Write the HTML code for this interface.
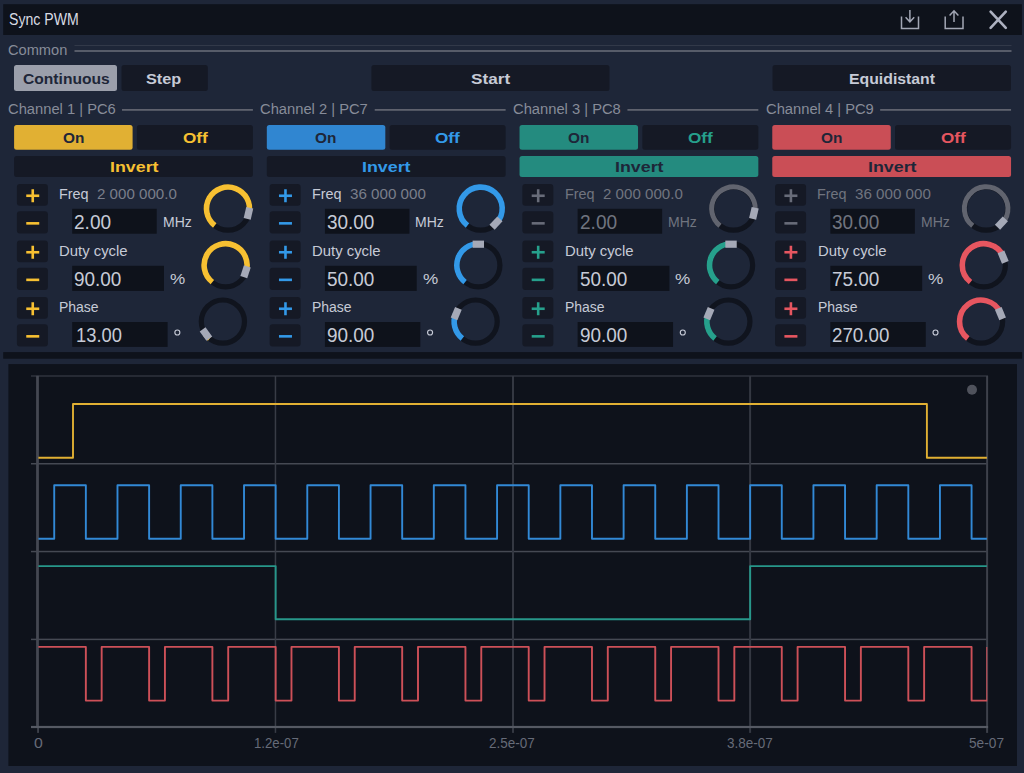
<!DOCTYPE html>
<html><head><meta charset="utf-8"><title>Sync PWM</title>
<style>
html,body{margin:0;padding:0;}
body{width:1024px;height:773px;background:#1e2638;position:relative;overflow:hidden;font-family:"Liberation Sans",sans-serif;}
.t{position:absolute;white-space:pre;line-height:1;transform-origin:0 0;}
.b{position:absolute;}
</style></head><body>
<svg class="b" style="left:0;top:0" width="1024" height="773" viewBox="0 0 1024 773">
<rect x="3.20" y="4.20" width="1018.70" height="30.80" fill="#0e121b"/>
<g fill="none" stroke="#a2a6b4" stroke-width="1.5"><path d="M901.5 16.5 V28.4 H918.5 V16.5"/><path d="M909.9 10 V21.8 M905.6 17.2 L909.9 21.8 L914.2 17.2"/><path d="M945.2 16.5 V28.4 H963 V16.5"/><path d="M954 22 V11 M949.6 15.4 L954 10.8 L958.4 15.4"/></g><path d="M990.6 11.6 L1005.8 27.9 M1005.8 11.6 L990.6 27.9" fill="none" stroke="#adb1c0" stroke-width="2.6" stroke-linecap="round"/>
<rect x="74.50" y="50.20" width="937.00" height="1.60" fill="#666a75"/>
<rect x="74.50" y="45.00" width="937.00" height="1.00" fill="#323949"/>
<rect x="14.00" y="65.00" width="103.00" height="26.10" rx="2.5" fill="#9b9fab"/>
<rect x="121.50" y="65.00" width="86.30" height="26.10" rx="2.5" fill="#151925"/>
<rect x="371.40" y="65.00" width="238.10" height="26.10" rx="2.5" fill="#151925"/>
<rect x="772.50" y="65.00" width="238.50" height="26.10" rx="2.5" fill="#151925"/>
<rect x="122.00" y="109.10" width="130.90" height="1.60" fill="#666a75"/>
<rect x="14.10" y="124.90" width="118.50" height="24.80" rx="2.5" fill="#e1b033"/>
<rect x="136.90" y="124.90" width="116.00" height="24.80" rx="2.5" fill="#151925"/>
<rect x="14.10" y="156.00" width="238.80" height="20.90" rx="2.5" fill="#151925"/>
<rect x="16.90" y="183.90" width="31.00" height="21.90" rx="3" fill="#151925"/>
<rect x="26.25" y="194.45" width="13.00" height="2.60" fill="#f7c032"/>
<rect x="31.45" y="189.25" width="2.60" height="13.00" fill="#f7c032"/>
<rect x="16.90" y="211.30" width="31.00" height="22.30" rx="3" fill="#151925"/>
<rect x="26.25" y="222.05" width="13.00" height="2.60" fill="#f7c032"/>
<rect x="72.20" y="208.80" width="84.50" height="24.90" fill="#0e121b"/>
<circle cx="228.00" cy="208.60" r="21.6" fill="none" stroke="#10141e" stroke-width="5.2"/><path d="M214.76 225.54 A21.5 21.5 0 1 1 248.95 213.44" fill="none" stroke="#f7c032" stroke-width="5.6"/><rect x="244.86" y="207.62" width="7.2" height="11.4" fill="#a5a9b7" transform="rotate(193.00 248.46 213.32)"/>
<rect x="16.90" y="240.40" width="31.00" height="21.90" rx="3" fill="#151925"/>
<rect x="26.25" y="250.95" width="13.00" height="2.60" fill="#f7c032"/>
<rect x="31.45" y="245.75" width="2.60" height="13.00" fill="#f7c032"/>
<rect x="16.90" y="267.80" width="31.00" height="22.30" rx="3" fill="#151925"/>
<rect x="26.25" y="278.55" width="13.00" height="2.60" fill="#f7c032"/>
<rect x="72.20" y="265.80" width="91.80" height="25.10" fill="#0e121b"/>
<circle cx="225.60" cy="265.20" r="21.6" fill="none" stroke="#10141e" stroke-width="5.2"/><path d="M212.36 282.14 A21.5 21.5 0 1 1 246.05 271.84" fill="none" stroke="#f7c032" stroke-width="5.6"/><rect x="241.97" y="265.99" width="7.2" height="11.4" fill="#a5a9b7" transform="rotate(198.00 245.57 271.69)"/>
<rect x="16.90" y="296.90" width="31.00" height="21.90" rx="3" fill="#151925"/>
<rect x="26.25" y="307.45" width="13.00" height="2.60" fill="#f7c032"/>
<rect x="31.45" y="302.25" width="2.60" height="13.00" fill="#f7c032"/>
<rect x="16.90" y="324.30" width="31.00" height="22.30" rx="3" fill="#151925"/>
<rect x="26.25" y="335.05" width="13.00" height="2.60" fill="#f7c032"/>
<rect x="72.20" y="322.00" width="95.40" height="24.90" fill="#0e121b"/>
<circle cx="177.35" cy="332.5" r="2.5" fill="none" stroke="#c6cad6" stroke-width="1.15"/>
<circle cx="222.90" cy="321.60" r="21.6" fill="none" stroke="#10141e" stroke-width="5.2"/><path d="M209.66 338.54 A21.5 21.5 0 0 1 205.55 334.30" fill="none" stroke="#f7c032" stroke-width="5.6"/><rect x="202.35" y="328.30" width="7.2" height="11.4" fill="#a5a9b7" transform="rotate(323.80 205.95 334.00)"/>
<rect x="374.72" y="109.10" width="130.90" height="1.60" fill="#666a75"/>
<rect x="266.82" y="124.90" width="118.50" height="24.80" rx="2.5" fill="#3086d1"/>
<rect x="389.62" y="124.90" width="116.00" height="24.80" rx="2.5" fill="#151925"/>
<rect x="266.82" y="156.00" width="238.80" height="20.90" rx="2.5" fill="#151925"/>
<rect x="269.62" y="183.90" width="31.00" height="21.90" rx="3" fill="#151925"/>
<rect x="278.97" y="194.45" width="13.00" height="2.60" fill="#3399e8"/>
<rect x="284.17" y="189.25" width="2.60" height="13.00" fill="#3399e8"/>
<rect x="269.62" y="211.30" width="31.00" height="22.30" rx="3" fill="#151925"/>
<rect x="278.97" y="222.05" width="13.00" height="2.60" fill="#3399e8"/>
<rect x="324.92" y="208.80" width="84.50" height="24.90" fill="#0e121b"/>
<circle cx="480.72" cy="208.60" r="21.6" fill="none" stroke="#10141e" stroke-width="5.2"/><path d="M467.48 225.54 A21.5 21.5 0 1 1 496.34 223.37" fill="none" stroke="#3399e8" stroke-width="5.6"/><rect x="492.38" y="217.33" width="7.2" height="11.4" fill="#a5a9b7" transform="rotate(223.40 495.98 223.03)"/>
<rect x="269.62" y="240.40" width="31.00" height="21.90" rx="3" fill="#151925"/>
<rect x="278.97" y="250.95" width="13.00" height="2.60" fill="#3399e8"/>
<rect x="284.17" y="245.75" width="2.60" height="13.00" fill="#3399e8"/>
<rect x="269.62" y="267.80" width="31.00" height="22.30" rx="3" fill="#151925"/>
<rect x="278.97" y="278.55" width="13.00" height="2.60" fill="#3399e8"/>
<rect x="324.92" y="265.80" width="91.80" height="25.10" fill="#0e121b"/>
<circle cx="478.32" cy="265.20" r="21.6" fill="none" stroke="#10141e" stroke-width="5.2"/><path d="M465.08 282.14 A21.5 21.5 0 0 1 478.32 243.70" fill="none" stroke="#3399e8" stroke-width="5.6"/><rect x="474.72" y="238.50" width="7.2" height="11.4" fill="#a5a9b7" transform="rotate(90.00 478.32 244.20)"/>
<rect x="269.62" y="296.90" width="31.00" height="21.90" rx="3" fill="#151925"/>
<rect x="278.97" y="307.45" width="13.00" height="2.60" fill="#3399e8"/>
<rect x="284.17" y="302.25" width="2.60" height="13.00" fill="#3399e8"/>
<rect x="269.62" y="324.30" width="31.00" height="22.30" rx="3" fill="#151925"/>
<rect x="278.97" y="335.05" width="13.00" height="2.60" fill="#3399e8"/>
<rect x="324.92" y="322.00" width="95.40" height="24.90" fill="#0e121b"/>
<circle cx="430.07" cy="332.5" r="2.5" fill="none" stroke="#c6cad6" stroke-width="1.15"/>
<circle cx="475.62" cy="321.60" r="21.6" fill="none" stroke="#10141e" stroke-width="5.2"/><path d="M462.38 338.54 A21.5 21.5 0 0 1 455.76 313.37" fill="none" stroke="#3399e8" stroke-width="5.6"/><rect x="452.62" y="307.86" width="7.2" height="11.4" fill="#a5a9b7" transform="rotate(382.50 456.22 313.56)"/>
<rect x="627.44" y="109.10" width="130.90" height="1.60" fill="#666a75"/>
<rect x="519.54" y="124.90" width="118.50" height="24.80" rx="2.5" fill="#248b7f"/>
<rect x="642.34" y="124.90" width="116.00" height="24.80" rx="2.5" fill="#151925"/>
<rect x="519.54" y="156.00" width="238.80" height="20.90" rx="2.5" fill="#248b7f"/>
<rect x="522.34" y="183.90" width="31.00" height="21.90" rx="3" fill="#151925"/>
<rect x="531.69" y="194.45" width="13.00" height="2.60" fill="#686c79"/>
<rect x="536.89" y="189.25" width="2.60" height="13.00" fill="#686c79"/>
<rect x="522.34" y="211.30" width="31.00" height="22.30" rx="3" fill="#151925"/>
<rect x="531.69" y="222.05" width="13.00" height="2.60" fill="#686c79"/>
<rect x="577.64" y="208.80" width="84.50" height="24.90" fill="#0e121b"/>
<circle cx="733.44" cy="208.60" r="21.6" fill="none" stroke="#10141e" stroke-width="5.2"/><path d="M720.02 225.78 A21.8 21.8 0 1 1 754.68 213.50" fill="none" stroke="#61646f" stroke-width="5.0"/><rect x="750.30" y="207.62" width="7.2" height="11.4" fill="#a5a9b7" transform="rotate(193.00 753.90 213.32)"/>
<rect x="522.34" y="240.40" width="31.00" height="21.90" rx="3" fill="#151925"/>
<rect x="531.69" y="250.95" width="13.00" height="2.60" fill="#26a08c"/>
<rect x="536.89" y="245.75" width="2.60" height="13.00" fill="#26a08c"/>
<rect x="522.34" y="267.80" width="31.00" height="22.30" rx="3" fill="#151925"/>
<rect x="531.69" y="278.55" width="13.00" height="2.60" fill="#26a08c"/>
<rect x="577.64" y="265.80" width="91.80" height="25.10" fill="#0e121b"/>
<circle cx="731.04" cy="265.20" r="21.6" fill="none" stroke="#10141e" stroke-width="5.2"/><path d="M717.80 282.14 A21.5 21.5 0 0 1 731.04 243.70" fill="none" stroke="#26a08c" stroke-width="5.6"/><rect x="727.44" y="238.50" width="7.2" height="11.4" fill="#a5a9b7" transform="rotate(90.00 731.04 244.20)"/>
<rect x="522.34" y="296.90" width="31.00" height="21.90" rx="3" fill="#151925"/>
<rect x="531.69" y="307.45" width="13.00" height="2.60" fill="#26a08c"/>
<rect x="536.89" y="302.25" width="2.60" height="13.00" fill="#26a08c"/>
<rect x="522.34" y="324.30" width="31.00" height="22.30" rx="3" fill="#151925"/>
<rect x="531.69" y="335.05" width="13.00" height="2.60" fill="#26a08c"/>
<rect x="577.64" y="322.00" width="95.40" height="24.90" fill="#0e121b"/>
<circle cx="682.79" cy="332.5" r="2.5" fill="none" stroke="#c6cad6" stroke-width="1.15"/>
<circle cx="728.34" cy="321.60" r="21.6" fill="none" stroke="#10141e" stroke-width="5.2"/><path d="M715.10 338.54 A21.5 21.5 0 0 1 708.48 313.37" fill="none" stroke="#26a08c" stroke-width="5.6"/><rect x="705.34" y="307.86" width="7.2" height="11.4" fill="#a5a9b7" transform="rotate(382.50 708.94 313.56)"/>
<rect x="880.16" y="109.10" width="130.90" height="1.60" fill="#666a75"/>
<rect x="772.26" y="124.90" width="118.50" height="24.80" rx="2.5" fill="#ca4e56"/>
<rect x="895.06" y="124.90" width="116.00" height="24.80" rx="2.5" fill="#151925"/>
<rect x="772.26" y="156.00" width="238.80" height="20.90" rx="2.5" fill="#ca4e56"/>
<rect x="775.06" y="183.90" width="31.00" height="21.90" rx="3" fill="#151925"/>
<rect x="784.41" y="194.45" width="13.00" height="2.60" fill="#686c79"/>
<rect x="789.61" y="189.25" width="2.60" height="13.00" fill="#686c79"/>
<rect x="775.06" y="211.30" width="31.00" height="22.30" rx="3" fill="#151925"/>
<rect x="784.41" y="222.05" width="13.00" height="2.60" fill="#686c79"/>
<rect x="830.36" y="208.80" width="84.50" height="24.90" fill="#0e121b"/>
<circle cx="986.16" cy="208.60" r="21.6" fill="none" stroke="#10141e" stroke-width="5.2"/><path d="M972.74 225.78 A21.8 21.8 0 1 1 1002.00 223.58" fill="none" stroke="#61646f" stroke-width="5.0"/><rect x="997.82" y="217.33" width="7.2" height="11.4" fill="#a5a9b7" transform="rotate(223.40 1001.42 223.03)"/>
<rect x="775.06" y="240.40" width="31.00" height="21.90" rx="3" fill="#151925"/>
<rect x="784.41" y="250.95" width="13.00" height="2.60" fill="#e65660"/>
<rect x="789.61" y="245.75" width="2.60" height="13.00" fill="#e65660"/>
<rect x="775.06" y="267.80" width="31.00" height="22.30" rx="3" fill="#151925"/>
<rect x="784.41" y="278.55" width="13.00" height="2.60" fill="#e65660"/>
<rect x="830.36" y="265.80" width="91.80" height="25.10" fill="#0e121b"/>
<circle cx="983.76" cy="265.20" r="21.6" fill="none" stroke="#10141e" stroke-width="5.2"/><path d="M970.52 282.14 A21.5 21.5 0 1 1 1003.62 256.97" fill="none" stroke="#e65660" stroke-width="5.6"/><rect x="999.56" y="251.46" width="7.2" height="11.4" fill="#a5a9b7" transform="rotate(157.50 1003.16 257.16)"/>
<rect x="775.06" y="296.90" width="31.00" height="21.90" rx="3" fill="#151925"/>
<rect x="784.41" y="307.45" width="13.00" height="2.60" fill="#e65660"/>
<rect x="789.61" y="302.25" width="2.60" height="13.00" fill="#e65660"/>
<rect x="775.06" y="324.30" width="31.00" height="22.30" rx="3" fill="#151925"/>
<rect x="784.41" y="335.05" width="13.00" height="2.60" fill="#e65660"/>
<rect x="830.36" y="322.00" width="95.40" height="24.90" fill="#0e121b"/>
<circle cx="935.51" cy="332.5" r="2.5" fill="none" stroke="#c6cad6" stroke-width="1.15"/>
<circle cx="981.06" cy="321.60" r="21.6" fill="none" stroke="#10141e" stroke-width="5.2"/><path d="M967.82 338.54 A21.5 21.5 0 1 1 1000.92 313.37" fill="none" stroke="#e65660" stroke-width="5.6"/><rect x="996.86" y="307.86" width="7.2" height="11.4" fill="#a5a9b7" transform="rotate(157.50 1000.46 313.56)"/>
<rect x="3.20" y="352.10" width="1018.90" height="6.60" fill="#0e121b"/>
<rect x="8.40" y="364.10" width="1008.60" height="401.90" fill="#0e121b"/>
<rect x="31" y="375.10" width="957" height="1.8" fill="#2a2e38"/><rect x="31" y="463.00" width="957" height="1.5" fill="#454953"/><rect x="31" y="550.80" width="957" height="1.5" fill="#454953"/><rect x="31" y="638.65" width="957" height="1.5" fill="#454953"/><rect x="274.70" y="376" width="1.5" height="356.90" fill="#383c46"/><rect x="512.00" y="376" width="2" height="356.90" fill="#343842"/><rect x="749.10" y="376" width="2" height="356.90" fill="#343842"/><rect x="986.10" y="376" width="2" height="356.90" fill="#3d414b"/><rect x="36.1" y="375.8" width="2.8" height="352" fill="#444852"/><rect x="37.1" y="727" width="1.9" height="5.9" fill="#3d414b"/><rect x="31" y="725.9" width="957.1" height="2.2" fill="#555963"/><clipPath id="pc"><rect x="37" y="376" width="950.3" height="351"/></clipPath><g clip-path="url(#pc)"><path d="M38.40 457.80 L73.00 457.80 L73.00 404.00 L926.90 404.00 L926.90 457.80 L986.90 457.80" fill="none" stroke="#e1b033" stroke-width="1.9" stroke-linejoin="round"/><path d="M38.40 538.80 L54.22 538.80 L54.22 485.30 L85.85 485.30 L85.85 538.80 L117.48 538.80 L117.48 485.30 L149.12 485.30 L149.12 538.80 L180.75 538.80 L180.75 485.30 L212.38 485.30 L212.38 538.80 L244.02 538.80 L244.02 485.30 L275.65 485.30 L275.65 538.80 L307.28 538.80 L307.28 485.30 L338.92 485.30 L338.92 538.80 L370.55 538.80 L370.55 485.30 L402.18 485.30 L402.18 538.80 L433.82 538.80 L433.82 485.30 L465.45 485.30 L465.45 538.80 L497.08 538.80 L497.08 485.30 L528.72 485.30 L528.72 538.80 L560.35 538.80 L560.35 485.30 L591.98 485.30 L591.98 538.80 L623.62 538.80 L623.62 485.30 L655.25 485.30 L655.25 538.80 L686.88 538.80 L686.88 485.30 L718.52 485.30 L718.52 538.80 L750.15 538.80 L750.15 485.30 L781.78 485.30 L781.78 538.80 L813.42 538.80 L813.42 485.30 L845.05 485.30 L845.05 538.80 L876.68 538.80 L876.68 485.30 L908.32 485.30 L908.32 538.80 L939.95 538.80 L939.95 485.30 L971.58 485.30 L971.58 538.80 L986.90 538.80" fill="none" stroke="#3289d6" stroke-width="1.9" stroke-linejoin="round"/><path d="M38.40 566.10 L275.65 566.10 L275.65 619.20 L750.15 619.20 L750.15 566.10 L986.90 566.10" fill="none" stroke="#27978a" stroke-width="1.9" stroke-linejoin="round"/><path d="M38.40 646.90 L85.85 646.90 L85.85 700.60 L101.67 700.60 L101.67 646.90 L149.12 646.90 L149.12 700.60 L164.93 700.60 L164.93 646.90 L212.38 646.90 L212.38 700.60 L228.20 700.60 L228.20 646.90 L275.65 646.90 L275.65 700.60 L291.47 700.60 L291.47 646.90 L338.92 646.90 L338.92 700.60 L354.73 700.60 L354.73 646.90 L402.18 646.90 L402.18 700.60 L418.00 700.60 L418.00 646.90 L465.45 646.90 L465.45 700.60 L481.27 700.60 L481.27 646.90 L528.72 646.90 L528.72 700.60 L544.53 700.60 L544.53 646.90 L591.98 646.90 L591.98 700.60 L607.80 700.60 L607.80 646.90 L655.25 646.90 L655.25 700.60 L671.07 700.60 L671.07 646.90 L718.52 646.90 L718.52 700.60 L734.33 700.60 L734.33 646.90 L781.78 646.90 L781.78 700.60 L797.60 700.60 L797.60 646.90 L845.05 646.90 L845.05 700.60 L860.87 700.60 L860.87 646.90 L908.32 646.90 L908.32 700.60 L924.13 700.60 L924.13 646.90 L971.58 646.90 L971.58 700.60 L987.20 700.60 L987.20 646.90" fill="none" stroke="#cd5058" stroke-width="1.9" stroke-linejoin="round"/></g><circle cx="972" cy="389.8" r="5" fill="#4f525c"/>
</svg>
<span class="t" style="left:8.70px;top:12.00px;font-size:16px;color:#d8dbe3;transform:scaleX(0.8809);">Sync PWM</span>
<span class="t" style="left:7.50px;top:42.00px;font-size:15.5px;color:#878c99;transform:scaleX(0.9430);">Common</span>
<span class="t" style="left:22.55px;top:71.00px;font-size:15.5px;color:#1e2638;font-weight:bold;transform:scaleX(1.0071);">Continuous</span>
<span class="t" style="left:146.47px;top:71.00px;font-size:15.5px;color:#c6cad6;font-weight:bold;transform:scaleX(1.0495);">Step</span>
<span class="t" style="left:471.20px;top:71.00px;font-size:15.5px;color:#c6cad6;font-weight:bold;transform:scaleX(1.1074);">Start</span>
<span class="t" style="left:848.80px;top:71.00px;font-size:15.5px;color:#c6cad6;font-weight:bold;transform:scaleX(1.0192);">Equidistant</span>
<span class="t" style="left:7.50px;top:101.00px;font-size:15.5px;color:#878c99;transform:scaleX(0.9501);">Channel 1 | PC6</span>
<span class="t" style="left:62.50px;top:130.00px;font-size:15.5px;color:#1e2638;font-weight:bold;transform:scaleX(0.9940);">On</span>
<span class="t" style="left:182.60px;top:130.00px;font-size:15.5px;color:#f7c032;font-weight:bold;transform:scaleX(1.1065);">Off</span>
<span class="t" style="left:109.75px;top:159.00px;font-size:15.5px;color:#f7c032;font-weight:bold;transform:scaleX(1.1491);">Invert</span>
<span class="t" style="left:59.30px;top:186.00px;font-size:15.5px;color:#c6cad6;transform:scaleX(0.9288);">Freq</span>
<span class="t" style="left:97.20px;top:186.00px;font-size:15.5px;color:#7a7e8a;transform:scaleX(0.9745);">2 000 000.0</span>
<span class="t" style="left:74.30px;top:212.00px;font-size:20px;color:#c6cad6;transform:scaleX(0.9532);">2.00</span>
<span class="t" style="left:162.50px;top:214.00px;font-size:15.5px;color:#c6cad6;transform:scaleX(0.9042);">MHz</span>
<span class="t" style="left:59.40px;top:243.00px;font-size:15.5px;color:#c6cad6;transform:scaleX(0.9596);">Duty cycle</span>
<span class="t" style="left:74.10px;top:269.00px;font-size:20px;color:#c6cad6;transform:scaleX(0.9472);">90.00</span>
<span class="t" style="left:169.80px;top:271.00px;font-size:15.5px;color:#c6cad6;transform:scaleX(1.1031);">%</span>
<span class="t" style="left:59.40px;top:299.00px;font-size:15.5px;color:#c6cad6;transform:scaleX(0.9012);">Phase</span>
<span class="t" style="left:75.60px;top:325.00px;font-size:20px;color:#c6cad6;transform:scaleX(0.9173);">13.00</span>
<span class="t" style="left:260.22px;top:101.00px;font-size:15.5px;color:#878c99;transform:scaleX(0.9501);">Channel 2 | PC7</span>
<span class="t" style="left:315.22px;top:130.00px;font-size:15.5px;color:#1e2638;font-weight:bold;transform:scaleX(0.9940);">On</span>
<span class="t" style="left:435.32px;top:130.00px;font-size:15.5px;color:#3399e8;font-weight:bold;transform:scaleX(1.1065);">Off</span>
<span class="t" style="left:362.47px;top:159.00px;font-size:15.5px;color:#3399e8;font-weight:bold;transform:scaleX(1.1491);">Invert</span>
<span class="t" style="left:312.02px;top:186.00px;font-size:15.5px;color:#c6cad6;transform:scaleX(0.9288);">Freq</span>
<span class="t" style="left:349.92px;top:186.00px;font-size:15.5px;color:#7a7e8a;transform:scaleX(0.9784);">36 000 000</span>
<span class="t" style="left:326.82px;top:212.00px;font-size:20px;color:#c6cad6;transform:scaleX(0.9472);">30.00</span>
<span class="t" style="left:415.22px;top:214.00px;font-size:15.5px;color:#c6cad6;transform:scaleX(0.9042);">MHz</span>
<span class="t" style="left:312.12px;top:243.00px;font-size:15.5px;color:#c6cad6;transform:scaleX(0.9596);">Duty cycle</span>
<span class="t" style="left:326.82px;top:269.00px;font-size:20px;color:#c6cad6;transform:scaleX(0.9472);">50.00</span>
<span class="t" style="left:422.52px;top:271.00px;font-size:15.5px;color:#c6cad6;transform:scaleX(1.1031);">%</span>
<span class="t" style="left:312.12px;top:299.00px;font-size:15.5px;color:#c6cad6;transform:scaleX(0.9012);">Phase</span>
<span class="t" style="left:326.82px;top:325.00px;font-size:20px;color:#c6cad6;transform:scaleX(0.9472);">90.00</span>
<span class="t" style="left:512.94px;top:101.00px;font-size:15.5px;color:#878c99;transform:scaleX(0.9501);">Channel 3 | PC8</span>
<span class="t" style="left:567.94px;top:130.00px;font-size:15.5px;color:#1e2638;font-weight:bold;transform:scaleX(0.9940);">On</span>
<span class="t" style="left:688.04px;top:130.00px;font-size:15.5px;color:#26a08c;font-weight:bold;transform:scaleX(1.1065);">Off</span>
<span class="t" style="left:615.19px;top:159.00px;font-size:15.5px;color:#1e2638;font-weight:bold;transform:scaleX(1.1491);">Invert</span>
<span class="t" style="left:564.74px;top:186.00px;font-size:15.5px;color:#70747f;transform:scaleX(0.9288);">Freq</span>
<span class="t" style="left:602.64px;top:186.00px;font-size:15.5px;color:#70747f;transform:scaleX(0.9745);">2 000 000.0</span>
<span class="t" style="left:579.74px;top:212.00px;font-size:20px;color:#70747f;transform:scaleX(0.9532);">2.00</span>
<span class="t" style="left:667.94px;top:214.00px;font-size:15.5px;color:#70747f;transform:scaleX(0.9042);">MHz</span>
<span class="t" style="left:564.84px;top:243.00px;font-size:15.5px;color:#c6cad6;transform:scaleX(0.9596);">Duty cycle</span>
<span class="t" style="left:579.54px;top:269.00px;font-size:20px;color:#c6cad6;transform:scaleX(0.9472);">50.00</span>
<span class="t" style="left:675.24px;top:271.00px;font-size:15.5px;color:#c6cad6;transform:scaleX(1.1031);">%</span>
<span class="t" style="left:564.84px;top:299.00px;font-size:15.5px;color:#c6cad6;transform:scaleX(0.9012);">Phase</span>
<span class="t" style="left:579.54px;top:325.00px;font-size:20px;color:#c6cad6;transform:scaleX(0.9472);">90.00</span>
<span class="t" style="left:765.66px;top:101.00px;font-size:15.5px;color:#878c99;transform:scaleX(0.9501);">Channel 4 | PC9</span>
<span class="t" style="left:820.66px;top:130.00px;font-size:15.5px;color:#1e2638;font-weight:bold;transform:scaleX(0.9940);">On</span>
<span class="t" style="left:940.76px;top:130.00px;font-size:15.5px;color:#e65660;font-weight:bold;transform:scaleX(1.1065);">Off</span>
<span class="t" style="left:867.91px;top:159.00px;font-size:15.5px;color:#1e2638;font-weight:bold;transform:scaleX(1.1491);">Invert</span>
<span class="t" style="left:817.46px;top:186.00px;font-size:15.5px;color:#70747f;transform:scaleX(0.9288);">Freq</span>
<span class="t" style="left:855.36px;top:186.00px;font-size:15.5px;color:#70747f;transform:scaleX(0.9784);">36 000 000</span>
<span class="t" style="left:832.26px;top:212.00px;font-size:20px;color:#70747f;transform:scaleX(0.9472);">30.00</span>
<span class="t" style="left:920.66px;top:214.00px;font-size:15.5px;color:#70747f;transform:scaleX(0.9042);">MHz</span>
<span class="t" style="left:817.56px;top:243.00px;font-size:15.5px;color:#c6cad6;transform:scaleX(0.9596);">Duty cycle</span>
<span class="t" style="left:832.26px;top:269.00px;font-size:20px;color:#c6cad6;transform:scaleX(0.9472);">75.00</span>
<span class="t" style="left:927.96px;top:271.00px;font-size:15.5px;color:#c6cad6;transform:scaleX(1.1031);">%</span>
<span class="t" style="left:817.56px;top:299.00px;font-size:15.5px;color:#c6cad6;transform:scaleX(0.9012);">Phase</span>
<span class="t" style="left:832.26px;top:325.00px;font-size:20px;color:#c6cad6;transform:scaleX(0.9366);">270.00</span>
<span class="t" style="left:33.75px;top:735.00px;font-size:15px;color:#666b78;transform:scaleX(1.0552);">0</span>
<span class="t" style="left:253.75px;top:735.00px;font-size:15px;color:#666b78;transform:scaleX(0.8795);">1.2e-07</span>
<span class="t" style="left:489.00px;top:735.00px;font-size:15px;color:#666b78;transform:scaleX(0.8982);">2.5e-07</span>
<span class="t" style="left:726.70px;top:735.00px;font-size:15px;color:#666b78;transform:scaleX(0.9002);">3.8e-07</span>
<span class="t" style="left:969.40px;top:735.00px;font-size:15px;color:#666b78;transform:scaleX(0.9122);">5e-07</span>
</body></html>
